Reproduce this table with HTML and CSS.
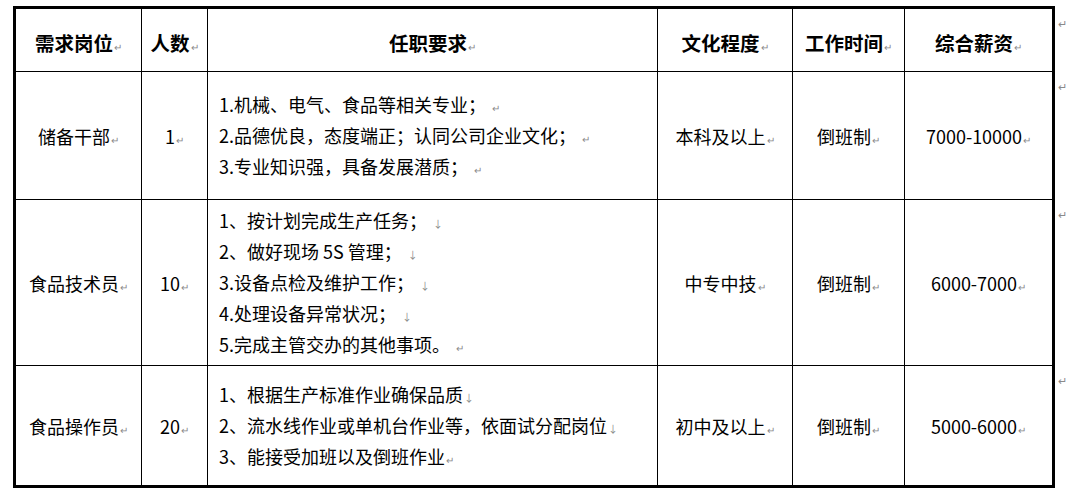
FILE: index.html
```html
<!DOCTYPE html>
<html lang="zh-CN">
<head>
<meta charset="utf-8">
<title>招聘岗位</title>
<link rel="stylesheet" href="styles.css">
</head>
<body>
<table class="jobs">
  <colgroup>
    <col class="c1"><col class="c2"><col class="c3"><col class="c4"><col class="c5"><col class="c6">
  </colgroup>
  <tr class="head">
    <th>需求岗位<span class="pm">↵</span></th>
    <th>人数<span class="pm">↵</span></th>
    <th>任职要求<span class="pm">↵</span></th>
    <th>文化程度<span class="pm">↵</span></th>
    <th>工作时间<span class="pm">↵</span></th>
    <th class="last">综合薪资<span class="pm">↵</span></th>
  </tr>
  <tr class="r1">
    <td>储备干部<span class="pm">↵</span></td>
    <td>1<span class="pm">↵</span></td>
    <td class="req">
      <div class="ln">1.机械、电气、食品等相关专业；<span class="pm sp">↵</span></div>
      <div class="ln">2.品德优良，态度端正；认同公司企业文化；<span class="pm sp">↵</span></div>
      <div class="ln">3.专业知识强，具备发展潜质；<span class="pm sp">↵</span></div>
    </td>
    <td>本科及以上<span class="pm">↵</span></td>
    <td>倒班制<span class="pm">↵</span></td>
    <td class="last">7000-10000<span class="pm">↵</span></td>
  </tr>
  <tr class="r2">
    <td>食品技术员<span class="pm">↵</span></td>
    <td>10<span class="pm">↵</span></td>
    <td class="req">
      <div class="ln">1、按计划完成生产任务；<span class="pm sp">↓</span></div>
      <div class="ln">2、做好现场 5S 管理；<span class="pm sp">↓</span></div>
      <div class="ln">3.设备点检及维护工作；<span class="pm sp">↓</span></div>
      <div class="ln">4.处理设备异常状况；<span class="pm sp">↓</span></div>
      <div class="ln">5.完成主管交办的其他事项。<span class="pm sp">↵</span></div>
    </td>
    <td>中专中技<span class="pm">↵</span></td>
    <td>倒班制<span class="pm">↵</span></td>
    <td class="last">6000-7000<span class="pm">↵</span></td>
  </tr>
  <tr class="r3">
    <td>食品操作员<span class="pm">↵</span></td>
    <td>20<span class="pm">↵</span></td>
    <td class="req">
      <div class="ln">1、根据生产标准作业确保品质<span class="pm">↓</span></div>
      <div class="ln">2、流水线作业或单机台作业等，依面试分配岗位<span class="pm">↓</span></div>
      <div class="ln">3、能接受加班以及倒班作业<span class="pm">↵</span></div>
    </td>
    <td>初中及以上<span class="pm">↵</span></td>
    <td>倒班制<span class="pm">↵</span></td>
    <td class="last">5000-6000<span class="pm">↵</span></td>
  </tr>
</table>
</body>
</html>
```

FILE: styles.css
```css
html, body {
  margin: 0;
  padding: 0;
  background: #ffffff;
}

body {
  padding: 6px 0 0 13px;
  font-family: "Noto Sans CJK SC", "Noto Sans", sans-serif;
  color: #000000;
}

.jobs {
  border-collapse: separate;
  border-spacing: 0;
  border: 3px solid #000000;
  table-layout: fixed;
  width: 1042px;
}

.c1 { width: 126px; }
.c2 { width: 66px; }
.c3 { width: 450px; }
.c4 { width: 135px; }
.c5 { width: 112px; }
.c6 { width: 147px; }

.jobs th,
.jobs td {
  box-sizing: border-box;
  border-right: 1px solid #000000;
  border-bottom: 1px solid #000000;
  padding: 0;
  text-align: center;
  vertical-align: middle;
  font-size: 18px;
  font-weight: 400;
  line-height: 24px;
  white-space: nowrap;
}

.jobs th {
  font-size: 19.5px;
  font-weight: 700;
  padding-top: 5px;
}

.jobs .last {
  border-right: none;
  position: relative;
}

.jobs .last::after {
  content: "↵";
  position: absolute;
  right: -15px;
  top: 8px;
  font-size: 11px;
  font-weight: 400;
  line-height: 12px;
  color: #8a8a8a;
}

.jobs .r3 td {
  border-bottom: none;
}

.head th { height: 63px; }
.r1 td { height: 128px; }
.r2 td { height: 166px; }
.r3 td { height: 119px; }

.jobs td.req {
  text-align: left;
  padding-left: 11px;
}

.ln {
  height: 31px;
  line-height: 31px;
  overflow: visible;
}

.pm {
  font-size: 10px;
  font-weight: 400;
  line-height: 0;
  color: #8a8a8a;
  margin-left: 1px;
  vertical-align: baseline;
}

.pm.sp {
  margin-left: 6px;
}
```
